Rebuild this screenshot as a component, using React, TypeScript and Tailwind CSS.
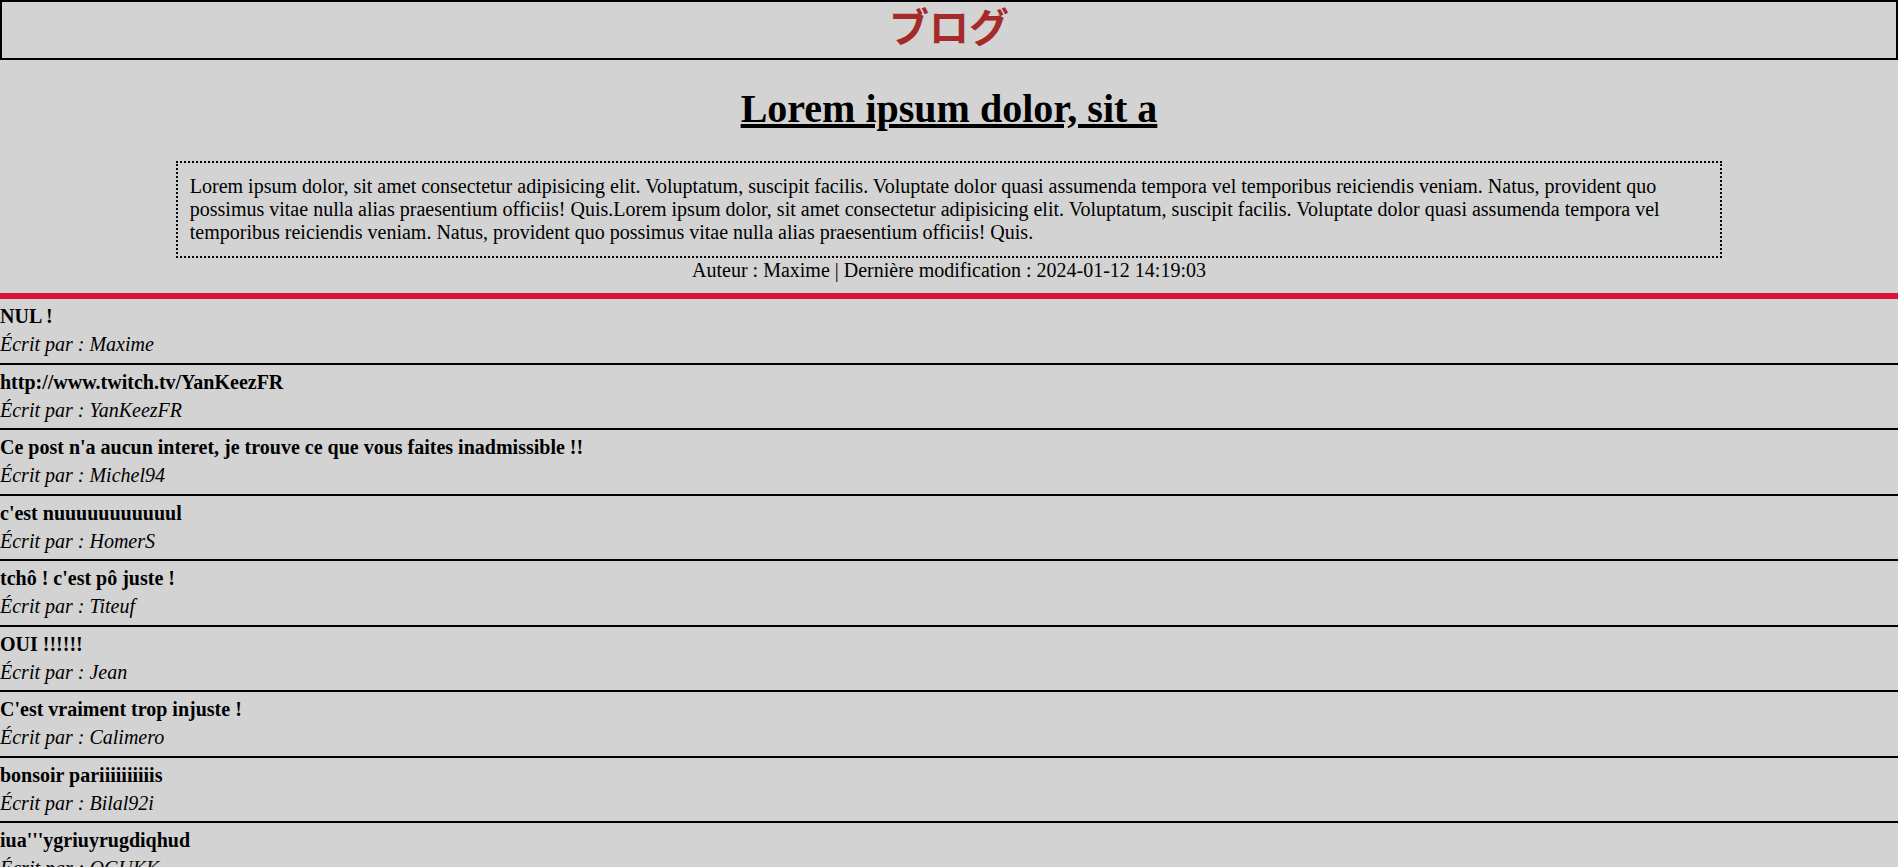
const comments = [
  { text: 'NUL !', author: 'Maxime' },
  { text: 'http://www.twitch.tv/YanKeezFR', author: 'YanKeezFR' },
  { text: "Ce post n'a aucun interet, je trouve ce que vous faites inadmissible !!", author: 'Michel94' },
  { text: "c'est nuuuuuuuuuuul", author: 'HomerS' },
  { text: "tchô ! c'est pô juste !", author: 'Titeuf' },
  { text: 'OUI !!!!!!', author: 'Jean' },
  { text: "C'est vraiment trop injuste !", author: 'Calimero' },
  { text: 'bonsoir pariiiiiiiiiis', author: 'Bilal92i' },
  { text: "iua'''ygriuyrugdiqhud", author: 'OGUKK' },
];

const body =
  'Lorem ipsum dolor, sit amet consectetur adipisicing elit. Voluptatum, suscipit facilis. Voluptate dolor quasi assumenda tempora vel temporibus reiciendis veniam. Natus, provident quo possimus vitae nulla alias praesentium officiis! Quis.Lorem ipsum dolor, sit amet consectetur adipisicing elit. Voluptatum, suscipit facilis. Voluptate dolor quasi assumenda tempora vel temporibus reiciendis veniam. Natus, provident quo possimus vitae nulla alias praesentium officiis! Quis.';

function Comment({ text, author }: { text: string; author: string }) {
  return (
    <div className="flex flex-col gap-[5px] pt-[6px] pb-[6.5px] border-b-2 border-black">
      <strong className="font-bold leading-[23px]">{text}</strong>
      <em className="italic leading-[23px]">Écrit par : {author}</em>
    </div>
  );
}

export default function App() {
  return (
    <div className="min-h-screen bg-[#d3d3d3] text-black text-[20px] leading-[23px] font-['Liberation_Serif',serif]">
      <header className="h-[60px] border-2 border-black">
        <h1 className="text-center text-[40px] leading-[46px] font-bold text-[#a52a2a] font-['Noto_Sans_CJK_JP',sans-serif]">
          ブログ
        </h1>
      </header>

      <section>
        <h2 className="mt-[26px] text-center text-[40px] leading-[46px] font-bold underline">
          Lorem ipsum dolor, sit a
        </h2>
        <p className="mt-[29px] mx-auto box-content w-4/5 p-3 border-2 border-dotted border-black">
          {body}
        </p>
        <p className="mt-[1px] text-center">
          Auteur : Maxime | Dernière modification : 2024-01-12 14:19:03
        </p>
      </section>

      <div className="mt-[11px] h-[6px] bg-[#dc143c]" />

      <section>
        {comments.map((c) => (
          <Comment key={c.author} text={c.text} author={c.author} />
        ))}
      </section>
    </div>
  );
}
